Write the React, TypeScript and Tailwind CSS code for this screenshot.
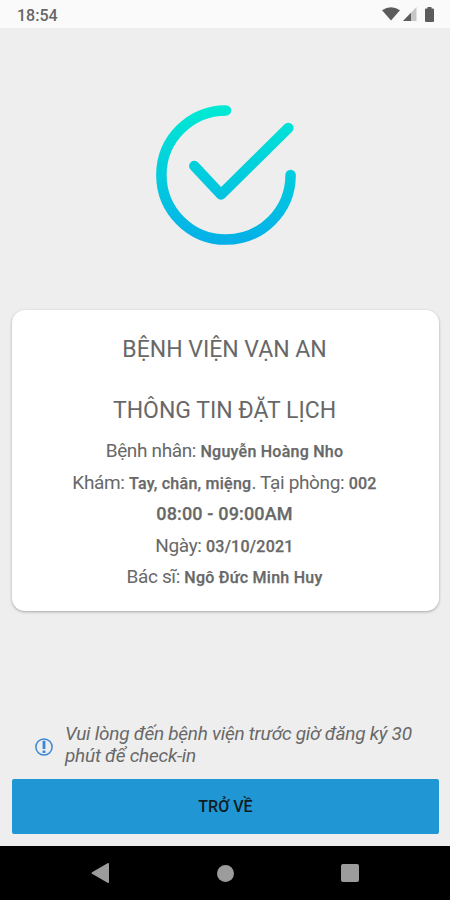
import type { ReactNode } from "react";

interface Booking {
  hospital: string;
  patient: string;
  department: string;
  room: string;
  time: string;
  date: string;
  doctor: string;
}

const booking: Booking = {
  hospital: "BỆNH VIỆN VẠN AN",
  patient: "Nguyễn Hoàng Nho",
  department: "Tay, chân, miệng",
  room: "002",
  time: "08:00 - 09:00AM",
  date: "03/10/2021",
  doctor: "Ngô Đức Minh Huy",
};

function StatusBar() {
  return (
    <header className="flex h-7 shrink-0 items-center justify-between bg-[#fafafa] pl-[17px] pr-4 text-[#666666]">
      <span className="pt-[3px] text-[16px] font-medium leading-none">18:54</span>
      <div className="flex items-center">
        {/* wifi */}
        <svg width="18" height="14" viewBox="0 0 18 14" fill="#5c5c5c">
          <path d="M0 3.2Q9 -2.8 18 3.2L9 13.6Z" />
        </svg>
        {/* signal */}
        <svg className="ml-[3px]" width="14" height="14" viewBox="0 0 14 14">
          <path d="M13.5 0V14H0Z" fill="#c6c6c6" />
          <path d="M8 5.8V14H0Z" fill="#5c5c5c" />
        </svg>
        {/* battery */}
        <svg className="ml-2" width="9" height="15" viewBox="0 0 9 15" fill="#5c5c5c">
          <path d="M2.5 0H6.5V1.5H8A1 1 0 0 1 9 2.5V14A1 1 0 0 1 8 15H1A1 1 0 0 1 0 14V2.5A1 1 0 0 1 1 1.5H2.5Z" />
        </svg>
      </div>
    </header>
  );
}

function SuccessIcon() {
  return (
    <svg width="140" height="140" viewBox="0 0 140 140" fill="none">
      <defs>
        <linearGradient id="success" x1="0" y1="0" x2="0" y2="140" gradientUnits="userSpaceOnUse">
          <stop offset="0" stopColor="#00ead3" />
          <stop offset="1" stopColor="#05afe8" />
        </linearGradient>
      </defs>
      <g stroke="url(#success)" strokeWidth="10.5" strokeLinecap="round" strokeLinejoin="round">
        <path d="M70 5.4A64.6 64.6 0 1 0 134.6 70" />
        <path d="M38.3 61L65 89.5L132.3 23" />
      </g>
    </svg>
  );
}

function InfoRow({ children }: { children: ReactNode }) {
  return (
    <p className="h-[31.5px] whitespace-nowrap text-[19px] leading-[31.5px] tracking-[-0.35px]">{children}</p>
  );
}

function Value({ children }: { children: ReactNode }) {
  return <b className="text-[16px] font-medium tracking-[0.25px] [-webkit-text-stroke:0.25px_#686868]">{children}</b>;
}

function NavigationBar() {
  return (
    <nav className="flex h-[54px] shrink-0 items-center justify-between bg-black px-[91px]">
      <svg width="19" height="20" viewBox="0 0 19 20" fill="#9c9c9c">
        <path d="M1 9.2L16.5 0.3Q18 -0.3 18 1V19Q18 20.3 16.5 19.7L1 10.8Q0 10 1 9.2Z" />
      </svg>
      <span className="h-[17px] w-[17px] rounded-full bg-[#9c9c9c]" />
      <span className="h-[18px] w-[18px] rounded-[2px] bg-[#9c9c9c]" />
    </nav>
  );
}

export default function App() {
  return (
    <div className="flex h-[900px] w-[450px] flex-col overflow-hidden bg-[#eeeeee] font-['Roboto','Noto_Sans',sans-serif] text-[#686868]">
      <StatusBar />

      <main className="flex flex-1 flex-col pl-3 pr-[11px]">
        <div className="flex justify-center pt-[77px]">
          <SuccessIcon />
        </div>

        <section className="mt-[65px] h-[301px] rounded-[13px] bg-white pr-[2px] pt-[25px] text-center shadow-[0_1px_3px_rgba(0,0,0,0.3)]">
          <h1 className="h-[61px] text-[23px] leading-[30px]">{booking.hospital}</h1>
          <h2 className="h-[39px] text-[23px] leading-[30px]">THÔNG TIN ĐẶT LỊCH</h2>
          <InfoRow>
            Bệnh nhân: <Value>{booking.patient}</Value>
          </InfoRow>
          <InfoRow>
            Khám: <Value>{booking.department}</Value>. Tại phòng: <Value>{booking.room}</Value>
          </InfoRow>
          <InfoRow>
            <b className="text-[18px] font-medium tracking-[0.15px] [-webkit-text-stroke:0.25px_#686868]">
              {booking.time}
            </b>
          </InfoRow>
          <InfoRow>
            Ngày: <Value>{booking.date}</Value>
          </InfoRow>
          <InfoRow>
            Bác sĩ: <Value>{booking.doctor}</Value>
          </InfoRow>
        </section>

        <div className="mt-auto flex items-center pl-[23px]">
          <svg className="mt-[3px]" width="18" height="18" viewBox="0 0 18 18" fill="none" stroke="#3b87d6">
            <circle cx="9" cy="9" r="8.1" strokeWidth="1.5" />
            <path d="M9 2.8V11M9 12.4V15" strokeWidth="2.8" />
          </svg>
          <p className="ml-3 whitespace-nowrap text-[19px] italic leading-[22px] tracking-[-0.26px]">
            Vui lòng đến bệnh viện trước giờ đăng ký 30
            <br />
            phút để check-in
          </p>
        </div>

        <button className="mb-3 mt-3 h-[55px] shrink-0 rounded-[2px] bg-[#2196d4] pt-px text-[16px] font-medium text-[#101c24]">
          TRỞ VỀ
        </button>
      </main>

      <NavigationBar />
    </div>
  );
}
